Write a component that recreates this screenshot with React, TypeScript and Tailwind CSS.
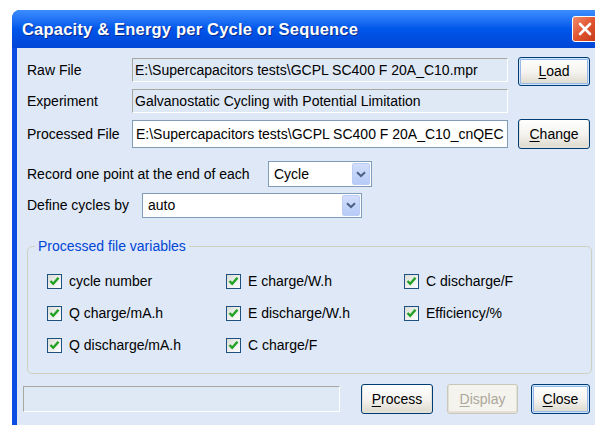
import React from "react";

const font = { fontFamily: '"Liberation Sans", Arial, sans-serif' };

function XpButton({
  mnemonic,
  rest,
  width,
  height = 30,
  disabled = false,
  focused = false,
}: {
  mnemonic: string;
  rest: string;
  width: string;
  height?: number;
  disabled?: boolean;
  focused?: boolean;
}) {
  const base =
    "flex items-center justify-center rounded-[3px] border text-[14px] shrink-0 ";
  const look = disabled
    ? "border-[#c9c7ba] bg-[#f4f3ee] text-[#aca899]"
    : "border-[#003c74] bg-gradient-to-b from-white via-[#f5f4f0] to-[#dcd8cc] text-black";
  const glow = focused
    ? " shadow-[inset_0_0_0_1px_#cee7ff,inset_0_0_0_2px_#98b8ea]"
    : " shadow-[inset_0_-1px_0_1px_#e3e1d6]";
  return (
    <div className={base + look + glow + " " + width} style={{ height }}>
      <span>
        <span className="underline underline-offset-2">{mnemonic}</span>
        {rest}
      </span>
    </div>
  );
}

function ReadOnlyField({ text, width }: { text: string; width: string }) {
  return (
    <div
      className={
        "h-[24px] flex items-center pl-[2px] border-t border-l border-[#a9a8a0] border-b border-r border-b-white border-r-white bg-[#dfe8f5] text-[14px] text-black whitespace-nowrap overflow-hidden " +
        width
      }
    >
      {text}
    </div>
  );
}

function Chevron() {
  return (
    <svg width="10" height="7" viewBox="0 0 10 7">
      <path d="M1 1.2 L5 5 L9 1.2" fill="none" stroke="#4d6185" strokeWidth="2" />
    </svg>
  );
}

function Combo({ value, width, height }: { value: string; width: string; height: number }) {
  return (
    <div
      className={"flex items-stretch border border-[#7f9db9] bg-white p-[1px] " + width}
      style={{ height }}
    >
      <div className="flex-1 flex items-center pl-[4px] text-[14px] text-black">{value}</div>
      <div className="w-[18px] rounded-[2px] flex items-center justify-center bg-gradient-to-b from-[#d2defc] to-[#b6cbf7] border border-[#bccdf5]">
        <Chevron />
      </div>
    </div>
  );
}

function CheckItem({ label }: { label: string }) {
  return (
    <div className="flex items-center h-[16px]">
      <div className="w-[15px] h-[15px] border border-[#1c5180] bg-gradient-to-br from-[#dcdcd7] to-white flex items-center justify-center shrink-0">
        <svg width="11" height="10" viewBox="0 0 11 10">
          <path d="M1.5 5 L4.2 7.8 L9.5 1.8" fill="none" stroke="#21a121" strokeWidth="2.4" />
        </svg>
      </div>
      <span className="ml-[7px] text-[14px] text-black whitespace-nowrap">{label}</span>
    </div>
  );
}

export default function App() {
  return (
    <div className="w-[595px] h-[425px] overflow-hidden bg-white pt-[10px] pl-[12px]" style={font}>
      <div className="w-[588px] h-[440px] rounded-t-[8px] bg-[#0a4ee2] flex flex-col overflow-hidden">
        {/* title bar */}
        <div className="h-[38px] shrink-0 flex items-center justify-between pl-[10px] bg-gradient-to-b from-[#3d8dff] via-[#0056ea] to-[#0046d6] rounded-t-[8px]">
          <span
            className="text-white font-bold text-[16.5px] tracking-[0.2px]"
            style={{ textShadow: "1px 1px 0 #0a2a8a" }}
          >
            Capacity &amp; Energy per Cycle or Sequence
          </span>
          <div className="mr-[2px] w-[26px] h-[26px] rounded-[3px] border border-white bg-gradient-to-br from-[#ef8a6a] via-[#e0532f] to-[#c23a18] flex items-center justify-center">
            <svg width="14" height="14" viewBox="0 0 14 14">
              <path d="M2 2 L12 12 M12 2 L2 12" stroke="white" strokeWidth="2.6" strokeLinecap="round" />
            </svg>
          </div>
        </div>

        {/* dialog body */}
        <div className="flex-1 ml-[5px] bg-[#dee8f7] pl-[10px] pt-[9px] flex flex-col">
          {/* Raw file */}
          <div className="flex items-start h-[29px]">
            <div className="w-[105px] text-[14px] text-black self-center -mt-[3px]">Raw File</div>
            <div className="mt-[1px]">
              <ReadOnlyField
                width="w-[376px]"
                text="E:\Supercapacitors tests\GCPL SC400 F 20A_C10.mpr"
              />
            </div>
            <div className="ml-[10px]">
              <XpButton mnemonic="L" rest="oad" width="w-[72px]" height={29} focused />
            </div>
          </div>

          {/* Experiment */}
          <div className="flex items-center h-[24px] mt-[3px]">
            <div className="w-[105px] text-[14px] text-black">Experiment</div>
            <ReadOnlyField width="w-[376px]" text="Galvanostatic Cycling with Potential Limitation" />
          </div>

          {/* Processed file */}
          <div className="flex items-center h-[30px] mt-[6px]">
            <div className="w-[105px] text-[14px] text-black">Processed File</div>
            <div className="w-[376px] h-[28px] border border-[#7f9db9] bg-white flex items-center pl-[3px] text-[14px] text-black whitespace-nowrap overflow-hidden">
              E:\Supercapacitors tests\GCPL SC400 F 20A_C10_cnQEC
            </div>
            <div className="ml-[10px]">
              <XpButton mnemonic="C" rest="hange" width="w-[72px]" height={30} />
            </div>
          </div>

          {/* Record point */}
          <div className="flex items-center h-[26px] mt-[12px]">
            <div className="w-[241px] text-[14px] text-black">Record one point at the end of each</div>
            <Combo value="Cycle" width="w-[104px]" height={26} />
          </div>

          {/* Define cycles */}
          <div className="flex items-center h-[25px] mt-[6px]">
            <div className="w-[115px] text-[14px] text-black">Define cycles by</div>
            <Combo value="auto" width="w-[220px]" height={25} />
          </div>

          {/* Processed file variables group */}
          <div className="relative mt-[28px] w-[565px] h-[128px] border border-[#d0d0bf] rounded-[5px]">
            <div className="absolute -top-[10px] left-[7px] px-[3px] bg-[#dee8f7] text-[14px] text-[#0046d5] leading-[18px]">
              Processed file variables
            </div>
            <div className="grid grid-cols-[179px_178px_1fr] gap-y-[16px] pl-[19px] pt-[26px]">
              <CheckItem label="cycle number" />
              <CheckItem label="E charge/W.h" />
              <CheckItem label="C discharge/F" />
              <CheckItem label="Q charge/mA.h" />
              <CheckItem label="E discharge/W.h" />
              <CheckItem label="Efficiency/%" />
              <CheckItem label="Q discharge/mA.h" />
              <CheckItem label="C charge/F" />
            </div>
          </div>

          {/* bottom bar */}
          <div className="flex items-center h-[30px] mt-[10px] -ml-[4px]">
            <div className="w-[317px] h-[26px] border-t border-l border-[#a9a8a0] border-b border-r border-b-white border-r-white bg-[#dfe8f5]" />
            <div className="ml-[21px]">
              <XpButton mnemonic="P" rest="rocess" width="w-[72px]" />
            </div>
            <div className="ml-[14px]">
              <XpButton mnemonic="D" rest="isplay" width="w-[71px]" disabled />
            </div>
            <div className="ml-[13px]">
              <XpButton mnemonic="C" rest="lose" width="w-[59px]" focused />
            </div>
          </div>
        </div>
      </div>
    </div>
  );
}
